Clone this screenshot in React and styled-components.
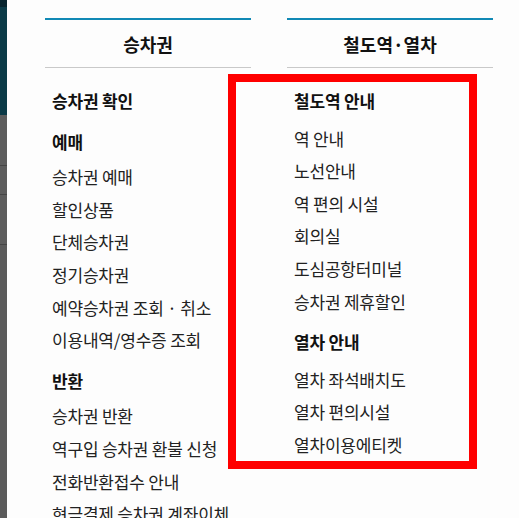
import React from "react";
import styled, { createGlobalStyle } from "styled-components";

const menus = [
  {
    title: "승차권",
    headGap: 3,
    groups: [
      { heading: "승차권 확인", items: [] },
      {
        heading: "예매",
        items: [
          "승차권 예매",
          "할인상품",
          "단체승차권",
          "정기승차권",
          "예약승차권 조회 · 취소",
          "이용내역/영수증 조회",
        ],
      },
      {
        heading: "반환",
        items: [
          "승차권 반환",
          "역구입 승차권 환불 신청",
          "전화반환접수 안내",
          "현금결제 승차권 계좌이체",
        ],
      },
    ],
  },
  {
    title: "철도역·열차",
    headGap: 5,
    groups: [
      {
        heading: "철도역 안내",
        items: [
          "역 안내",
          "노선안내",
          "역 편의 시설",
          "회의실",
          "도심공항터미널",
          "승차권 제휴할인",
        ],
      },
      {
        heading: "열차 안내",
        items: ["열차 좌석배치도", "열차 편의시설", "열차이용에티켓"],
      },
    ],
  },
];

const GlobalStyle = createGlobalStyle`
  html, body {
    margin: 0;
    padding: 0;
    height: 518px;
    overflow: hidden;
    background: #fdfdfd;
  }
  body {
    font-family: "Noto Sans CJK KR", "Noto Sans", sans-serif;
  }
`;

const Page = styled.div`
  position: relative;
  display: flex;
  height: 518px;
`;

const SideStrip = styled.div`
  width: 7px;
  flex-shrink: 0;
  display: flex;
  flex-direction: column;
  background: #5b5b5b;
`;

const StripBlock = styled.div`
  height: ${(p) => p.h}px;
  background: ${(p) => p.color};
  border-bottom: ${(p) => (p.line ? "1px solid #454545" : "none")};
`;

const Columns = styled.div`
  display: flex;
  gap: 36px;
  padding: 18px 0 0 38px;
`;

const Column = styled.section`
  width: 206px;
  border-top: 2px solid #1189b5;
`;

const ColumnTitle = styled.h2`
  margin: 0;
  height: 47px;
  display: flex;
  align-items: center;
  justify-content: center;
  font-size: 18px;
  font-weight: 700;
  color: #111;
  border-bottom: 1px solid #c9c9c9;
`;

const List = styled.ul`
  list-style: none;
  margin: 0;
  padding: 17px 0 0 7px;
`;

const Heading = styled.li`
  font-size: 17px;
  font-weight: 700;
  line-height: 32.6px;
  color: #111;
  margin: 8px 0 ${(p) => p.gap}px;
  letter-spacing: -0.2px;
  white-space: nowrap;

  &:first-child {
    margin-top: 0;
  }
`;

const Item = styled.li`
  font-size: 17px;
  font-weight: 400;
  line-height: 32.6px;
  color: #222;
  white-space: nowrap;
  letter-spacing: -0.2px;
`;

const Highlight = styled.div`
  position: absolute;
  left: 228px;
  top: 74px;
  width: 249px;
  height: 395px;
  box-sizing: border-box;
  border: 8px solid #ff0000;
  pointer-events: none;
`;

export default function App() {
  return (
    <>
      <GlobalStyle />
      <Page>
        <SideStrip>
          <StripBlock h={7} color="#07232d" />
          <StripBlock h={108} color="#0b3a47" />
          <StripBlock h={50} color="#5d5d5d" line />
          <StripBlock h={28} color="#5d5d5d" line />
          <StripBlock h={49} color="#5d5d5d" line />
        </SideStrip>
        <Columns>
          {menus.map((menu) => (
            <Column key={menu.title}>
              <ColumnTitle>{menu.title}</ColumnTitle>
              <List>
                {menu.groups.map((group) => (
                  <React.Fragment key={group.heading}>
                    <Heading gap={menu.headGap}>{group.heading}</Heading>
                    {group.items.map((item) => (
                      <Item key={item}>{item}</Item>
                    ))}
                  </React.Fragment>
                ))}
              </List>
            </Column>
          ))}
        </Columns>
        <Highlight />
      </Page>
    </>
  );
}
